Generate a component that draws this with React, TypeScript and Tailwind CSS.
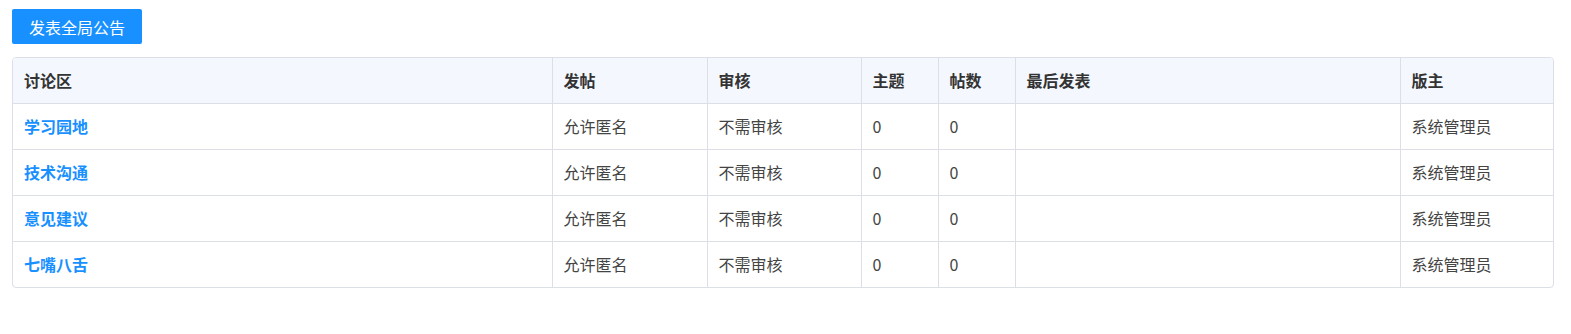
const columns = [
  { title: "讨论区", width: "w-[539px]" },
  { title: "发帖", width: "w-[155px]" },
  { title: "审核", width: "w-[154px]" },
  { title: "主题", width: "w-[77px]" },
  { title: "帖数", width: "w-[77px]" },
  { title: "最后发表", width: "w-[385px]" },
  { title: "版主", width: "" },
];

const forums = [
  { name: "学习园地" },
  { name: "技术沟通" },
  { name: "意见建议" },
  { name: "七嘴八舌" },
];

const App = () => {
  return (
    <div
      className="min-h-[334px] bg-white pl-3 pr-[17px] pt-[9px] text-[#333]"
      style={{ fontFamily: '"Noto Sans CJK SC", "Noto Sans", sans-serif' }}
    >
      <button className="h-[35px] w-[130px] rounded-[2px] bg-[#1890ff] text-[16px] text-white">
        发表全局公告
      </button>

      <div className="mt-[13px] overflow-hidden rounded-[4px] border border-[#dcdfe6]">
        <table className="w-full table-fixed border-collapse">
          <thead>
            <tr className="h-[45px] bg-[#f4f8fe]">
              {columns.map(({ title, width }, index) => (
                <th
                  key={index}
                  className={`${width} border-l border-[#dcdfe6] px-[11px] text-left text-[16px] font-bold first:border-l-0`}
                >
                  {title}
                </th>
              ))}
            </tr>
          </thead>
          <tbody>
            {forums.map(({ name }, index) => (
              <tr key={index} className="h-[46px] border-t border-[#dcdfe6] text-[16px] text-[#444]">
                <td className="px-[11px] font-bold text-[#1890ff]">{name}</td>
                <td className="border-l border-[#dcdfe6] px-[11px]">允许匿名</td>
                <td className="border-l border-[#dcdfe6] px-[11px]">不需审核</td>
                <td className="border-l border-[#dcdfe6] px-[11px]">0</td>
                <td className="border-l border-[#dcdfe6] px-[11px]">0</td>
                <td className="border-l border-[#dcdfe6] px-[11px]"></td>
                <td className="border-l border-[#dcdfe6] px-[11px]">系统管理员</td>
              </tr>
            ))}
          </tbody>
        </table>
      </div>
    </div>
  );
};

export default App;
